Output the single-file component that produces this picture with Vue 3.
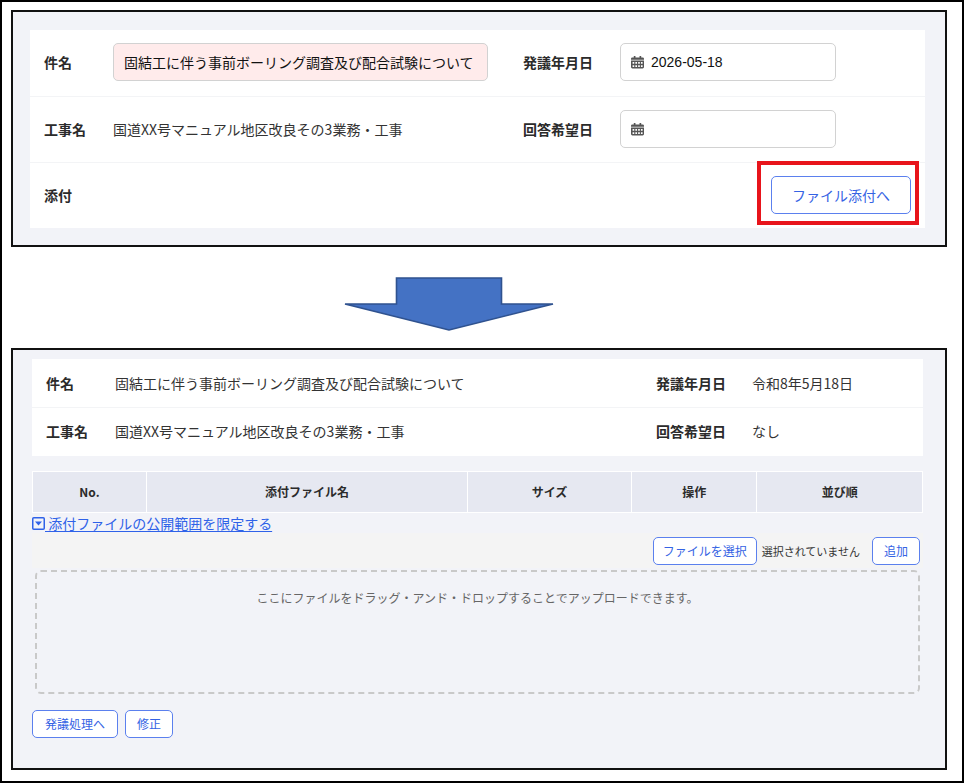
<script setup>
import { ref } from 'vue'

const subject = ref('固結工に伴う事前ボーリング調査及び配合試験について')
const project = '国道XX号マニュアル地区改良その3業務・工事'
const issueDate = ref('2026-05-18')
const replyDate = ref('')
const calendarPath =
  'M3 0.500h1.800v1.700h4.400V0.500h1.800v1.700h1.500Q14 2.200 14 3.500V4.500H0V3.500Q0 2.200 1.500 2.200H3z' +
  'M0 5.500h14v7Q14 14 12.500 14h-11Q0 14 0 12.500z' +
  'M1.700 7v2h1.800V7zM4.700 7v2h1.800V7zM7.700 7v2h1.800V7zM10.700 7v2h1.800V7z' +
  'M1.700 10.500v2h1.800v-2zM4.700 10.500v2h1.800v-2zM7.700 10.500v2h1.800v-2zM10.700 10.500v2h1.800v-2z'
const columns = [
  { key: 'no', label: 'No.' },
  { key: 'filename', label: '添付ファイル名' },
  { key: 'size', label: 'サイズ' },
  { key: 'action', label: '操作' },
  { key: 'order', label: '並び順' },
]
</script>

<template>
  <main class="page">
    <section class="panel panel-edit">
      <form class="card" @submit.prevent>
        <div class="row edit-row">
          <label class="name" for="subject">件名</label>
          <div class="wide">
            <input id="subject" v-model="subject" class="field required" type="text" />
          </div>
          <label class="name" for="issue-date">発議年月日</label>
          <div class="date">
            <svg class="calendar" viewBox="0 0 14 14" aria-hidden="true">
              <path fill="#555" fill-rule="evenodd" :d="calendarPath" />
            </svg>
            <input id="issue-date" v-model="issueDate" class="field date-field" type="text" />
          </div>
        </div>
        <div class="row edit-row">
          <span class="name">工事名</span>
          <span class="value">{{ project }}</span>
          <label class="name" for="reply-date">回答希望日</label>
          <div class="date">
            <svg class="calendar" viewBox="0 0 14 14" aria-hidden="true">
              <path fill="#555" fill-rule="evenodd" :d="calendarPath" />
            </svg>
            <input id="reply-date" v-model="replyDate" class="field date-field" type="text" />
          </div>
        </div>
        <div class="row attach-row">
          <span class="name">添付</span>
          <div class="highlighted">
            <button class="btn btn-large" type="button">ファイル添付へ</button>
          </div>
        </div>
      </form>
    </section>

    <svg class="arrow" viewBox="0 0 210 54" aria-hidden="true">
      <path d="M52.500 1H157.500V27H209L105 53L1 27H52.500Z" fill="#4472c4" stroke="#2f528f" stroke-width="1.600" />
    </svg>

    <section class="panel panel-attach">
      <div class="card">
        <div class="row info-row">
          <span class="name">件名</span>
          <span class="value">{{ subject }}</span>
          <span class="name">発議年月日</span>
          <span class="value">令和8年5月18日</span>
        </div>
        <div class="row info-row">
          <span class="name">工事名</span>
          <span class="value">{{ project }}</span>
          <span class="name">回答希望日</span>
          <span class="value">なし</span>
        </div>
      </div>

      <table class="files">
        <thead>
          <tr>
            <th v-for="c in columns" :key="c.key" :class="c.key" scope="col">{{ c.label }}</th>
          </tr>
        </thead>
      </table>

      <a class="scope-link" href="#">
        <svg class="toggle" viewBox="0 0 13 13" aria-hidden="true">
          <rect x="0.750" y="0.750" width="11.500" height="11.500" rx="1" fill="none" stroke="#2f62e8" stroke-width="1.500" />
          <path d="M3 4.500H10L6.500 8.500Z" fill="#2f62e8" />
        </svg><span class="link-text">&nbsp;添付ファイルの公開範囲を限定する</span>
      </a>

      <div class="upload">
        <input id="file" class="file-input" type="file" />
        <label class="btn btn-file" for="file">ファイルを選択</label>
        <span class="file-state">選択されていません</span>
        <button class="btn btn-short" type="button">追加</button>
      </div>

      <div class="drop">ここにファイルをドラッグ・アンド・ドロップすることでアップロードできます。</div>

      <div class="actions">
        <button class="btn" type="button">発議処理へ</button>
        <button class="btn btn-short" type="button">修正</button>
      </div>
    </section>
  </main>
</template>

<style>
body {
  margin: 0;
  background: #fff;
}
</style>

<style scoped>
.page,
.page * {
  box-sizing: border-box;
}

.page {
  display: flex;
  flex-direction: column;
  min-height: 100vh;
  padding: 8px 15px 11px 9px;
  border: 2px solid #000;
  color: #333;
  font-family: "Noto Sans CJK JP", sans-serif;
  font-size: 14px;
  line-height: 20px;
}

.panel {
  border: 2px solid #111;
  background: #f2f3f8;
}

.panel-edit {
  padding: 18px 20px 17px 17px;
}

.panel-attach {
  flex: 1;
  padding: 9px 22px 28px 19px;
}

.card {
  background: #fff;
}

.row {
  display: grid;
  align-items: center;
  padding: 0 14px 2px;
}

.row + .row {
  border-top: 1px solid #f3f4f6;
}

.edit-row {
  grid-template-columns: 69px minmax(0, 410fr) 97px minmax(0, 291fr);
  min-height: 66px;
}

.attach-row {
  grid-template-columns: 1fr auto;
  min-height: 66px;
}

.info-row {
  grid-template-columns: 69px minmax(0, 541fr) 96px minmax(0, 157fr);
  min-height: 49px;
}

.info-row:first-child {
  min-height: 48px;
  padding-bottom: 0;
}

.name {
  color: #2b2b2b;
  font-weight: 700;
}

.wide {
  padding-right: 35px;
}

.field {
  display: block;
  width: 100%;
  height: 38px;
  padding: 0 10px;
  border: 1px solid #d2d2d2;
  border-radius: 5px;
  background: #fff;
  color: #111;
  font: inherit;
}

.required {
  background: #ffebeb;
}

.date {
  position: relative;
  max-width: 216px;
}

.date-field {
  padding: 0 10px 0 30px;
  font-family: "Liberation Sans", sans-serif;
}

.calendar {
  position: absolute;
  top: 12px;
  left: 11px;
  width: 13px;
  height: 14px;
}

.highlighted {
  position: relative;
}

.highlighted::after {
  content: "";
  position: absolute;
  inset: -15px -8px -11px -14px;
  border: 4px solid #e8141b;
  pointer-events: none;
}

.btn {
  height: 28px;
  padding: 0 12px;
  border: 1px solid #5b80ee;
  border-radius: 5px;
  background: #fff;
  color: #3563e4;
  font-family: inherit;
  font-size: 12px;
  line-height: 26px;
  white-space: nowrap;
  cursor: pointer;
}

.btn-large {
  display: block;
  height: 38px;
  padding: 0 20px;
  font-size: 14px;
}

.btn-short {
  padding: 0 11px;
}

.arrow {
  align-self: center;
  width: 210px;
  height: 54px;
  margin: 30px 61px 17px 0;
}

.files {
  width: 100%;
  margin-top: 15px;
  border-collapse: collapse;
  table-layout: fixed;
}

.files th {
  height: 41px;
  padding: 0;
  border: 1px solid #fff;
  background: #e6e8f1;
  color: #2b2b2b;
  font-size: 12px;
  font-weight: 700;
  text-align: center;
}

.no {
  width: 12.8%;
}

.filename {
  width: 36.1%;
}

.size {
  width: 18.4%;
}

.action {
  width: 14.1%;
}

.scope-link {
  display: flex;
  align-items: center;
  width: fit-content;
  height: 20px;
  color: #2f62e8;
  text-decoration: none;
}

.link-text {
  text-decoration: underline;
  text-underline-offset: 2px;
}

.toggle {
  width: 13px;
  height: 13px;
}

.upload {
  position: relative;
  display: flex;
  align-items: center;
  justify-content: flex-end;
  height: 35px;
  padding-right: 3px;
  background: #f4f4f4;
}

.file-input {
  position: absolute;
  width: 1px;
  height: 1px;
  opacity: 0;
}

.btn-file {
  padding: 0 9px;
}

.file-state {
  margin: 0 12px 0 5px;
  font-size: 11px;
}

.drop {
  height: 124px;
  margin: 2px 3px 0;
  padding-top: 16px;
  border: 2px dashed #c9c9c9;
  border-radius: 6px;
  color: #666;
  font-size: 12px;
  text-align: center;
}

.actions {
  display: flex;
  gap: 7px;
  margin-top: 16px;
}
</style>
